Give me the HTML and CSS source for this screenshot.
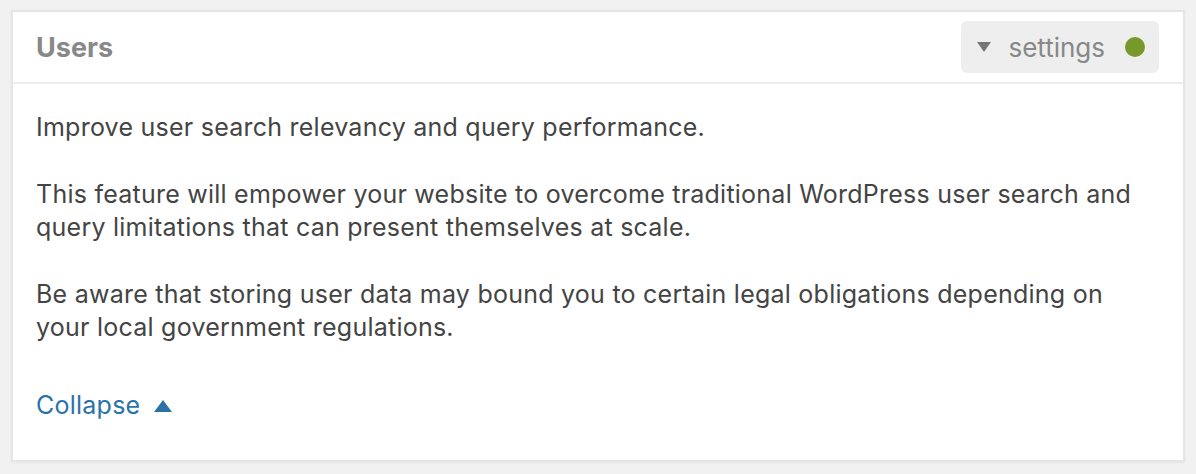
FILE: index.html
```html
<!DOCTYPE html>
<html lang="en">
<head>
    <meta charset="UTF-8">
    <title>Users</title>
    <link rel="stylesheet" href="styles.css">
</head>
<body>
    <div class="feature-box">
        <div class="feature-header">
            <h2 class="feature-title">Users</h2>
            <div class="settings-pill">
                <span class="caret-down"></span>
                <span class="settings-label">settings</span>
                <span class="status-dot"></span>
            </div>
        </div>

        <div class="feature-body">
            <p>Improve user search relevancy and query performance.</p>
            <p>This feature will empower your website to overcome traditional WordPress user search and query limitations that can present themselves at scale.</p>
            <p>Be aware that storing user data may bound you to certain legal obligations depending on your local government regulations.</p>
            <a class="collapse-link" href="#">Collapse <span class="caret-up"></span></a>
        </div>
    </div>
</body>
</html>
```

FILE: styles.css
```css
:root {
    --page-bg: #f1f1f1;
    --border-color: #e5e5e5;
    --text-color: #444;
    --muted-color: #888;
    --link-color: #2a73a8;
    --dot-color: #77992b;
}

body {
    margin: 0;
    padding: 10px 11px;
    background: var(--page-bg);
    font-family: "Inter", "Liberation Sans", sans-serif;
    color: var(--text-color);
}

.feature-box {
    background: #fff;
    border: 2px solid var(--border-color);
    box-shadow: 0 1px 2px rgba(0, 0, 0, 0.05);
}

/* Cabecera */
.feature-header {
    display: flex;
    align-items: center;
    justify-content: space-between;
    height: 70px;
    padding: 0 24px 0 23px;
    border-bottom: 2px solid #ececec;
}

.feature-title {
    margin: 0;
    font-size: 27px;
    font-weight: 700;
    color: var(--muted-color);
}

.settings-pill {
    display: flex;
    align-items: center;
    height: 52px;
    padding: 0 14px 0 16px;
    background: #eee;
    border-radius: 6px;
}

.caret-down {
    width: 0;
    height: 0;
    border-left: 7px solid transparent;
    border-right: 7px solid transparent;
    border-top: 10px solid #777;
    margin-right: 17px;
}

.settings-label {
    font-size: 26px;
    color: var(--muted-color);
}

.status-dot {
    width: 20px;
    height: 20px;
    border-radius: 50%;
    background: var(--dot-color);
    margin-left: 20px;
}

/* Cuerpo */
.feature-body {
    padding: 27px 44px 38px 23px;
    font-size: 25px;
    line-height: 33px;
    letter-spacing: 0.24px;
}

.feature-body p {
    margin: 0 0 34px;
}

.collapse-link {
    display: inline-flex;
    align-items: center;
    margin-top: 11px;
    color: var(--link-color);
    text-decoration: none;
}

.caret-up {
    width: 0;
    height: 0;
    border-left: 9px solid transparent;
    border-right: 9px solid transparent;
    border-bottom: 12px solid var(--link-color);
    margin-left: 14px;
}
```
